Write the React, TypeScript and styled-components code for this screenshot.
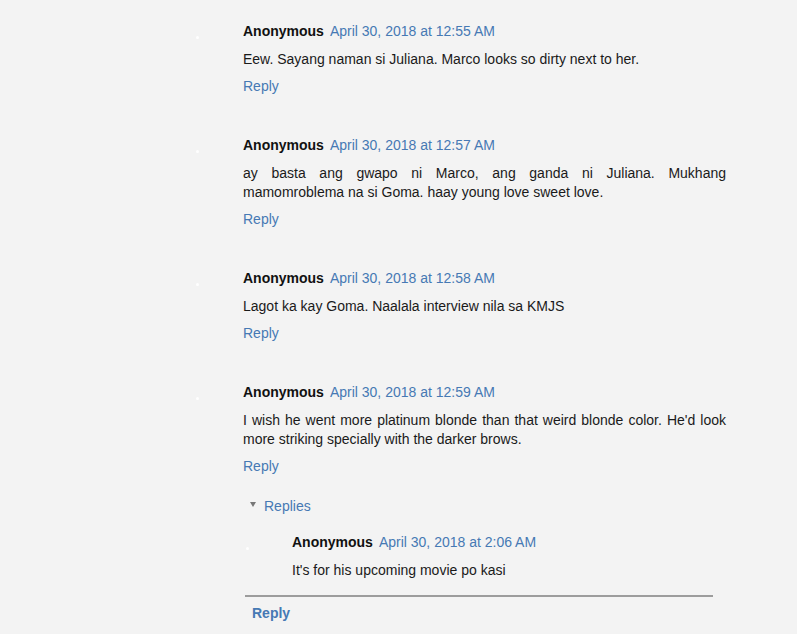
import React from 'react';
import styled, { createGlobalStyle } from 'styled-components';

const GlobalStyle = createGlobalStyle`
  html, body {
    margin: 0;
    padding: 0;
    background: #f3f3f3;
  }
  body {
    font-family: "Liberation Sans", Arial, sans-serif;
    font-size: 14px;
    line-height: 19px;
    color: #1a1a1a;
  }
`;

const Page = styled.div`
  width: 797px;
  height: 634px;
  overflow: hidden;
  background: #f3f3f3;
  padding-top: 22px;
  box-sizing: border-box;
`;

const Thread = styled.div<{ $indent: number }>`
  display: flex;
  flex-direction: column;
  margin-left: ${(p) => p.$indent}px;
`;

const Item = styled.div<{ $avatar: number; $last?: boolean }>`
  display: flex;
  margin-bottom: ${(p) => (p.$last ? 0 : 40)}px;
  & > :first-child {
    width: ${(p) => p.$avatar}px;
  }
`;

const Avatar = styled.div`
  flex: none;
  position: relative;
  &::after {
    content: '';
    position: absolute;
    left: 0;
    top: 14px;
    width: 3px;
    height: 3px;
    border-radius: 50%;
    background: rgba(255, 255, 255, 0.9);
  }
`;

const Body = styled.div<{ $width: number }>`
  width: ${(p) => p.$width}px;
  display: flex;
  flex-direction: column;
  gap: 8.5px;
`;

const Header = styled.div`
  display: flex;
  gap: 6px;
  white-space: nowrap;
`;

const Author = styled.span`
  font-weight: bold;
  color: #111;
`;

const Stamp = styled.a`
  color: #4679b4;
  text-decoration: none;
`;

const Content = styled.p`
  margin: 0;
  text-align: justify;
`;

const ReplyLink = styled.a<{ $bold?: boolean }>`
  color: #4679b4;
  text-decoration: none;
  font-weight: ${(p) => (p.$bold ? 'bold' : 'normal')};
`;

const RepliesBlock = styled.div`
  margin-top: 12.5px;
  display: flex;
  flex-direction: column;
`;

const Toggle = styled.div`
  display: flex;
  align-items: center;
  gap: 8px;
  padding-left: 7px;
  color: #4679b4;
  margin-bottom: 17px;
`;

const Caret = styled.span`
  width: 0;
  height: 0;
  border-left: 3.5px solid transparent;
  border-right: 3.5px solid transparent;
  border-top: 5px solid #777;
  margin-top: -4px;
`;

const Divider = styled.div`
  margin: 15px 0 0 2px;
  width: 468px;
  height: 2px;
  background: #9c9c9c;
`;

const BottomReply = styled.div`
  padding: 7.5px 0 0 9px;
`;

type C = { date: string; text: string };

const comments: C[] = [
  { date: 'April 30, 2018 at 12:55 AM', text: 'Eew. Sayang naman si Juliana. Marco looks so dirty next to her.' },
  {
    date: 'April 30, 2018 at 12:57 AM',
    text: 'ay basta ang gwapo ni Marco, ang ganda ni Juliana. Mukhang mamomroblema na si Goma. haay young love sweet love.',
  },
  { date: 'April 30, 2018 at 12:58 AM', text: 'Lagot ka kay Goma. Naalala interview nila sa KMJS' },
  {
    date: 'April 30, 2018 at 12:59 AM',
    text: "I wish he went more platinum blonde than that weird blonde color. He'd look more striking specially with the darker brows.",
  },
];

const CommentHead: React.FC<{ date: string }> = ({ date }) => (
  <Header>
    <Author>Anonymous</Author>
    <Stamp href="#">{date}</Stamp>
  </Header>
);

export default function App() {
  return (
    <Page>
      <GlobalStyle />
      <Thread $indent={196}>
        {comments.map((c, i) => {
          const last = i === comments.length - 1;
          return (
            <Item key={c.date} $avatar={47} $last={last}>
              <Avatar />
              <Body $width={483}>
                <CommentHead date={c.date} />
                <Content>{c.text}</Content>
                <ReplyLink href="#">Reply</ReplyLink>
                {last && (
                  <RepliesBlock>
                    <Toggle>
                      <Caret />
                      <span>Replies</span>
                    </Toggle>
                    <Thread $indent={3}>
                      <Item $avatar={46} $last>
                        <Avatar />
                        <Body $width={420}>
                          <CommentHead date="April 30, 2018 at 2:06 AM" />
                          <Content>It's for his upcoming movie po kasi</Content>
                        </Body>
                      </Item>
                    </Thread>
                    <Divider />
                    <BottomReply>
                      <ReplyLink href="#" $bold>
                        Reply
                      </ReplyLink>
                    </BottomReply>
                  </RepliesBlock>
                )}
              </Body>
            </Item>
          );
        })}
      </Thread>
    </Page>
  );
}
